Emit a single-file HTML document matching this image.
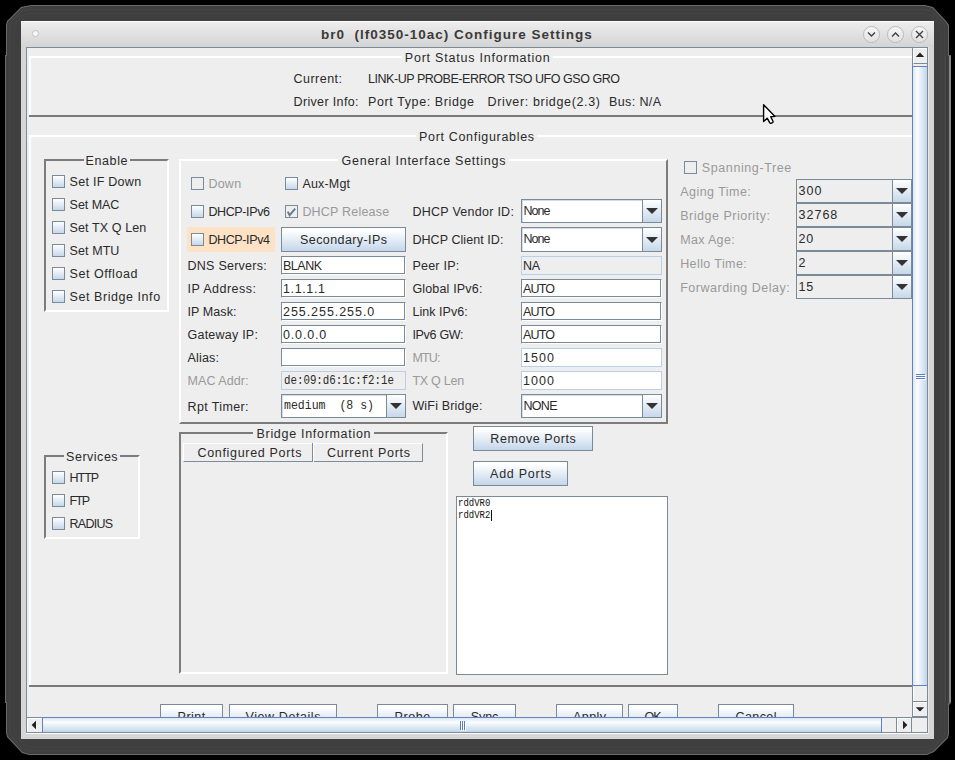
<!DOCTYPE html>
<html><head><meta charset="utf-8"><title>br0 Configure Settings</title>
<style>
html,body{margin:0;padding:0;width:955px;height:760px;overflow:hidden;background:#000;}
body{position:relative;font-family:"Liberation Sans", sans-serif;}
body div{position:absolute;}
</style></head><body>
<svg style="position:absolute;left:0;top:0" width="955" height="760"><polygon points="31,5 925,5 933,7 947,22 949,25 949,55 951,55 951,703 949,705 949,734 948,738 934,752 927,755 29,755 22,753 7,737 6,733 6,703 5,703 5,55 6,55 6,25 7,21 21,7" fill="#6a6a6a"/><polygon points="31,6 925,6 932.5,8 946,22.5 948,25.5 948,56 949,56 949,702 948,704 948,734 947,737.5 933.5,751 927,754 29,754 22.5,752 8,736.5 7,733 7,702 6,702 6,56 7,56 7,25 8,21.5 21.5,8" fill="#3f3f3f"/><rect x="949" y="56" width="2" height="646" fill="#888"/><rect x="946" y="56" width="1" height="646" fill="#363636"/><rect x="945" y="56" width="1" height="646" fill="#555"/><polygon points="30,9.5 22,11 11,22 10,26 10,732 11,735 23,749 30,751 926,751 932,749 944,736 945,733 945,26 943,23 931,11 924,9.5" fill="none" stroke="#474747" stroke-width="1"/><polygon points="29,13.5 23,15 15,23 14,27 14,731 15,733 24,745 30,747 925,747 931,745 940,734 941,731 941,27 939,24 930,15 923,13.5" fill="none" stroke="#444" stroke-width="1"/></svg>
<div style="left:21px;top:21px;width:913px;height:718px;background:#d6d6d6;"></div>
<div style="left:21px;top:21px;width:913px;height:26px;background:linear-gradient(#ededed,#d4d4d4);border-top:1px solid #fff;box-sizing:border-box;"></div>
<div style="left:32px;top:30px;width:7px;height:7px;border-radius:50%;box-sizing:border-box;border:1px solid #c0c0c0;background:#f8f8f8;"></div>
<div style="left:320.9px;top:27.2px;height:16px;line-height:16px;color:#3a3a3a;font-family:&quot;Liberation Sans&quot;, sans-serif;font-size:13.5px;font-weight:bold;letter-spacing:1.005px;white-space:pre;">br0  (lf0350-10ac) Configure Settings</div>
<div style="left:863.0px;top:25.5px;width:17px;height:17px;border-radius:50%;box-sizing:border-box;border:1.5px solid #bababa;background:linear-gradient(#f6f6f6,#e2e2e2);"></div>
<svg style="position:absolute;left:863.0px;top:25.8px" width="17" height="17"><path d="M5,6.5 L8.5,10 L12,6.5" stroke="#3e3e3e" stroke-width="1.35" fill="none"/></svg>
<div style="left:887.0px;top:25.5px;width:17px;height:17px;border-radius:50%;box-sizing:border-box;border:1.5px solid #bababa;background:linear-gradient(#f6f6f6,#e2e2e2);"></div>
<svg style="position:absolute;left:887.0px;top:25.8px" width="17" height="17"><path d="M5,10.5 L8.5,7 L12,10.5" stroke="#3e3e3e" stroke-width="1.35" fill="none"/></svg>
<div style="left:911.0px;top:25.5px;width:17px;height:17px;border-radius:50%;box-sizing:border-box;border:1.5px solid #bababa;background:linear-gradient(#f6f6f6,#e2e2e2);"></div>
<svg style="position:absolute;left:911.0px;top:25.8px" width="17" height="17"><path d="M5,5 L12,12 M12,5 L5,12" stroke="#3e3e3e" stroke-width="1.35" fill="none"/></svg>
<div style="left:26px;top:47px;width:903px;height:687px;box-sizing:border-box;border-left:1px solid #7a8a99;border-top:1px solid #7a8a99;border-right:1px solid #fff;border-bottom:1px solid #fff;"></div>
<div style="left:27px;top:48px;width:885px;height:669px;background:#eeeeee;overflow:hidden;"></div>
<div style="left:29px;top:56px;width:883px;height:2px;background:#fff;"></div>
<div style="left:29px;top:56px;width:2px;height:59px;background:#fff;"></div>
<div style="left:29px;top:115px;width:883px;height:2px;background:#7a7a7a;"></div>
<div style="left:401.5px;top:54.8px;width:151.5px;height:6px;background:#eeeeee;"></div>
<div style="left:404.8px;top:50.2px;height:16px;line-height:16px;color:#2a2a2a;font-family:&quot;Liberation Sans&quot;, sans-serif;font-size:12.5px;letter-spacing:0.780px;white-space:pre;">Port Status Information</div>
<div style="left:293.5px;top:71.1px;height:16px;line-height:16px;color:#2a2a2a;font-family:&quot;Liberation Sans&quot;, sans-serif;font-size:12.5px;letter-spacing:0.478px;white-space:pre;">Current:</div>
<div style="left:368.0px;top:71.1px;height:16px;line-height:16px;color:#2a2a2a;font-family:&quot;Liberation Sans&quot;, sans-serif;font-size:12.5px;letter-spacing:-0.460px;white-space:pre;">LINK-UP PROBE-ERROR TSO UFO GSO GRO</div>
<div style="left:293.5px;top:94.1px;height:16px;line-height:16px;color:#2a2a2a;font-family:&quot;Liberation Sans&quot;, sans-serif;font-size:12.5px;letter-spacing:0.351px;white-space:pre;">Driver Info:</div>
<div style="left:368.0px;top:94.1px;height:16px;line-height:16px;color:#2a2a2a;font-family:&quot;Liberation Sans&quot;, sans-serif;font-size:12.5px;letter-spacing:0.603px;white-space:pre;">Port Type: Bridge</div>
<div style="left:487.5px;top:94.1px;height:16px;line-height:16px;color:#2a2a2a;font-family:&quot;Liberation Sans&quot;, sans-serif;font-size:12.5px;letter-spacing:0.654px;white-space:pre;">Driver: bridge(2.3)</div>
<div style="left:609.0px;top:94.1px;height:16px;line-height:16px;color:#2a2a2a;font-family:&quot;Liberation Sans&quot;, sans-serif;font-size:12.5px;letter-spacing:0.382px;white-space:pre;">Bus: N/A</div>
<div style="left:29px;top:135px;width:883px;height:2px;background:#fff;"></div>
<div style="left:29px;top:135px;width:2px;height:550px;background:#fff;"></div>
<div style="left:29px;top:685px;width:883px;height:2px;background:#7a7a7a;"></div>
<div style="left:416px;top:133.5px;width:121px;height:6px;background:#eeeeee;"></div>
<div style="left:419.0px;top:128.9px;height:16px;line-height:16px;color:#2a2a2a;font-family:&quot;Liberation Sans&quot;, sans-serif;font-size:12.5px;letter-spacing:0.675px;white-space:pre;">Port Configurables</div>
<div style="left:44px;top:159px;width:125px;height:153px;box-sizing:border-box;border-left:2px solid #7c7c7c;border-top:2px solid #7c7c7c;border-right:2px solid #fff;border-bottom:2px solid #fff;"></div>
<div style="left:83.5px;top:157.3px;width:46.0px;height:6px;background:#eeeeee;"></div>
<div style="left:85.5px;top:152.7px;height:16px;line-height:16px;color:#2a2a2a;font-family:&quot;Liberation Sans&quot;, sans-serif;font-size:12.5px;letter-spacing:0.613px;white-space:pre;">Enable</div>
<div style="left:52px;top:175px;width:13px;height:13px;box-sizing:border-box;border:1px solid #7a8a99;background:linear-gradient(#ffffff,#c6d8ea);"></div>
<div style="left:69.6px;top:173.8px;height:16px;line-height:16px;color:#2a2a2a;font-family:&quot;Liberation Sans&quot;, sans-serif;font-size:12.5px;letter-spacing:0.272px;white-space:pre;">Set IF Down</div>
<div style="left:52px;top:198px;width:13px;height:13px;box-sizing:border-box;border:1px solid #7a8a99;background:linear-gradient(#ffffff,#c6d8ea);"></div>
<div style="left:69.6px;top:196.9px;height:16px;line-height:16px;color:#2a2a2a;font-family:&quot;Liberation Sans&quot;, sans-serif;font-size:12.5px;letter-spacing:-0.036px;white-space:pre;">Set MAC</div>
<div style="left:52px;top:221px;width:13px;height:13px;box-sizing:border-box;border:1px solid #7a8a99;background:linear-gradient(#ffffff,#c6d8ea);"></div>
<div style="left:69.6px;top:219.9px;height:16px;line-height:16px;color:#2a2a2a;font-family:&quot;Liberation Sans&quot;, sans-serif;font-size:12.5px;letter-spacing:0.108px;white-space:pre;">Set TX Q Len</div>
<div style="left:52px;top:244px;width:13px;height:13px;box-sizing:border-box;border:1px solid #7a8a99;background:linear-gradient(#ffffff,#c6d8ea);"></div>
<div style="left:69.6px;top:243.0px;height:16px;line-height:16px;color:#2a2a2a;font-family:&quot;Liberation Sans&quot;, sans-serif;font-size:12.5px;letter-spacing:0.081px;white-space:pre;">Set MTU</div>
<div style="left:52px;top:267px;width:13px;height:13px;box-sizing:border-box;border:1px solid #7a8a99;background:linear-gradient(#ffffff,#c6d8ea);"></div>
<div style="left:69.6px;top:266.0px;height:16px;line-height:16px;color:#2a2a2a;font-family:&quot;Liberation Sans&quot;, sans-serif;font-size:12.5px;letter-spacing:0.549px;white-space:pre;">Set Offload</div>
<div style="left:52px;top:290px;width:13px;height:13px;box-sizing:border-box;border:1px solid #7a8a99;background:linear-gradient(#ffffff,#c6d8ea);"></div>
<div style="left:69.6px;top:289.0px;height:16px;line-height:16px;color:#2a2a2a;font-family:&quot;Liberation Sans&quot;, sans-serif;font-size:12.5px;letter-spacing:0.557px;white-space:pre;">Set Bridge Info</div>
<div style="left:44px;top:455px;width:96px;height:84px;box-sizing:border-box;border-left:2px solid #7c7c7c;border-top:2px solid #7c7c7c;border-right:2px solid #fff;border-bottom:2px solid #fff;"></div>
<div style="left:64px;top:453.7px;width:55.7px;height:6px;background:#eeeeee;"></div>
<div style="left:66.1px;top:449.1px;height:16px;line-height:16px;color:#2a2a2a;font-family:&quot;Liberation Sans&quot;, sans-serif;font-size:12.5px;letter-spacing:0.509px;white-space:pre;">Services</div>
<div style="left:52px;top:471px;width:13px;height:13px;box-sizing:border-box;border:1px solid #7a8a99;background:linear-gradient(#ffffff,#c6d8ea);"></div>
<div style="left:69.4px;top:469.7px;height:16px;line-height:16px;color:#2a2a2a;font-family:&quot;Liberation Sans&quot;, sans-serif;font-size:12.5px;letter-spacing:-0.947px;white-space:pre;">HTTP</div>
<div style="left:52px;top:494px;width:13px;height:13px;box-sizing:border-box;border:1px solid #7a8a99;background:linear-gradient(#ffffff,#c6d8ea);"></div>
<div style="left:69.4px;top:492.8px;height:16px;line-height:16px;color:#2a2a2a;font-family:&quot;Liberation Sans&quot;, sans-serif;font-size:12.5px;letter-spacing:-1.455px;white-space:pre;">FTP</div>
<div style="left:52px;top:517px;width:13px;height:13px;box-sizing:border-box;border:1px solid #7a8a99;background:linear-gradient(#ffffff,#c6d8ea);"></div>
<div style="left:69.4px;top:515.9px;height:16px;line-height:16px;color:#2a2a2a;font-family:&quot;Liberation Sans&quot;, sans-serif;font-size:12.5px;letter-spacing:-0.687px;white-space:pre;">RADIUS</div>
<div style="left:179px;top:159px;width:489px;height:265px;box-sizing:border-box;border-left:2px solid #fff;border-top:2px solid #fff;border-right:2px solid #7c7c7c;border-bottom:2px solid #7c7c7c;"></div>
<div style="left:338px;top:157.5px;width:171px;height:6px;background:#eeeeee;"></div>
<div style="left:341.5px;top:152.9px;height:16px;line-height:16px;color:#2a2a2a;font-family:&quot;Liberation Sans&quot;, sans-serif;font-size:12.5px;letter-spacing:0.751px;white-space:pre;">General Interface Settings</div>
<div style="left:191px;top:177px;width:13px;height:13px;box-sizing:border-box;border:1px solid #7a8a99;background:#eeeeee;"></div>
<div style="left:208.4px;top:176.2px;height:16px;line-height:16px;color:#999;font-family:&quot;Liberation Sans&quot;, sans-serif;font-size:12.5px;letter-spacing:0.244px;white-space:pre;">Down</div>
<div style="left:285px;top:177px;width:13px;height:13px;box-sizing:border-box;border:1px solid #7a8a99;background:linear-gradient(#ffffff,#c6d8ea);"></div>
<div style="left:302.4px;top:176.2px;height:16px;line-height:16px;color:#2a2a2a;font-family:&quot;Liberation Sans&quot;, sans-serif;font-size:12.5px;letter-spacing:0.192px;white-space:pre;">Aux-Mgt</div>
<div style="left:191px;top:205px;width:13px;height:13px;box-sizing:border-box;border:1px solid #7a8a99;background:linear-gradient(#ffffff,#c6d8ea);"></div>
<div style="left:208.4px;top:203.9px;height:16px;line-height:16px;color:#2a2a2a;font-family:&quot;Liberation Sans&quot;, sans-serif;font-size:12.5px;letter-spacing:-0.374px;white-space:pre;">DHCP-IPv6</div>
<div style="left:285px;top:205px;width:13px;height:13px;box-sizing:border-box;border:1px solid #7a8a99;background:#eeeeee;"></div>
<svg style="position:absolute;left:285px;top:205px" width="13" height="13"><path d="M2.8,6.6 L4.6,10.2 L10.2,3.6" stroke="#6a7b8c" stroke-width="1.9" fill="none" stroke-linejoin="miter"/></svg>
<div style="left:302.4px;top:203.9px;height:16px;line-height:16px;color:#999;font-family:&quot;Liberation Sans&quot;, sans-serif;font-size:12.5px;letter-spacing:0.197px;white-space:pre;">DHCP Release</div>
<div style="left:412.4px;top:203.8px;height:16px;line-height:16px;color:#2a2a2a;font-family:&quot;Liberation Sans&quot;, sans-serif;font-size:12.5px;letter-spacing:0.269px;white-space:pre;">DHCP Vendor ID:</div>
<div style="left:521px;top:199px;width:141px;height:24px;box-sizing:border-box;border:1px solid #7a8a99;background:#ffffff;box-shadow:inset 1px 1px 0 #d0dcea;"></div>
<div style="left:642px;top:200px;width:19px;height:22px;box-sizing:border-box;border-left:1px solid #7a8a99;background:linear-gradient(#ffffff,#c6d8ea);"></div>
<svg style="position:absolute;left:644.5px;top:207.0px" width="14" height="8"><path d="M1,1 L13,1 L7,7 Z" fill="#333"/></svg>
<div style="left:523.5px;top:202.9px;height:16px;line-height:16px;color:#2a2a2a;font-family:&quot;Liberation Sans&quot;, sans-serif;font-size:12.5px;letter-spacing:-0.964px;white-space:pre;">None</div>
<div style="left:187px;top:227px;width:88px;height:25px;background:#fde2c6;"></div>
<div style="left:191px;top:233px;width:13px;height:13px;box-sizing:border-box;border:1px solid #7a8a99;background:linear-gradient(#ffffff,#c6d8ea);"></div>
<div style="left:208.4px;top:231.6px;height:16px;line-height:16px;color:#2a2a2a;font-family:&quot;Liberation Sans&quot;, sans-serif;font-size:12.5px;letter-spacing:-0.374px;white-space:pre;">DHCP-IPv4</div>
<div style="left:281px;top:227px;width:125px;height:25px;box-sizing:border-box;border:1px solid #7a8a99;background:linear-gradient(#ffffff 10%,#c4d6ea);"></div>
<div style="left:300.0px;top:231.9px;height:16px;line-height:16px;color:#2a2a2a;font-family:&quot;Liberation Sans&quot;, sans-serif;font-size:12.5px;letter-spacing:0.418px;white-space:pre;">Secondary-IPs</div>
<div style="left:412.4px;top:231.8px;height:16px;line-height:16px;color:#2a2a2a;font-family:&quot;Liberation Sans&quot;, sans-serif;font-size:12.5px;letter-spacing:0.066px;white-space:pre;">DHCP Client ID:</div>
<div style="left:521px;top:227px;width:141px;height:25px;box-sizing:border-box;border:1px solid #7a8a99;background:#ffffff;box-shadow:inset 1px 1px 0 #d0dcea;"></div>
<div style="left:642px;top:228px;width:19px;height:23px;box-sizing:border-box;border-left:1px solid #7a8a99;background:linear-gradient(#ffffff,#c6d8ea);"></div>
<svg style="position:absolute;left:644.5px;top:235.5px" width="14" height="8"><path d="M1,1 L13,1 L7,7 Z" fill="#333"/></svg>
<div style="left:523.5px;top:231.4px;height:16px;line-height:16px;color:#2a2a2a;font-family:&quot;Liberation Sans&quot;, sans-serif;font-size:12.5px;letter-spacing:-0.964px;white-space:pre;">None</div>
<div style="left:187.5px;top:258.4px;height:16px;line-height:16px;color:#2a2a2a;font-family:&quot;Liberation Sans&quot;, sans-serif;font-size:12.5px;letter-spacing:0.254px;white-space:pre;">DNS Servers:</div>
<div style="left:281px;top:256px;width:125px;height:19px;box-sizing:border-box;border:1px solid #7a8a99;border-right-color:#fff;border-bottom-color:#fff;background:#ffffff;box-shadow:inset -1px -1px 0 #7a8a99;"></div>
<div style="left:283.0px;top:258.4px;height:16px;line-height:16px;color:#2a2a2a;font-family:&quot;Liberation Sans&quot;, sans-serif;font-size:12.5px;letter-spacing:-0.500px;white-space:pre;">BLANK</div>
<div style="left:412.4px;top:258.4px;height:16px;line-height:16px;color:#2a2a2a;font-family:&quot;Liberation Sans&quot;, sans-serif;font-size:12.5px;letter-spacing:0.233px;white-space:pre;">Peer IP:</div>
<div style="left:521px;top:256px;width:141px;height:19px;box-sizing:border-box;border:1px solid #b8cfe5;background:#eeeeee;"></div>
<div style="left:523.0px;top:258.4px;height:16px;line-height:16px;color:#2a2a2a;font-family:&quot;Liberation Sans&quot;, sans-serif;font-size:12.5px;letter-spacing:-0.375px;white-space:pre;">NA</div>
<div style="left:187.5px;top:281.4px;height:16px;line-height:16px;color:#2a2a2a;font-family:&quot;Liberation Sans&quot;, sans-serif;font-size:12.5px;letter-spacing:0.470px;white-space:pre;">IP Address:</div>
<div style="left:281px;top:279px;width:125px;height:19px;box-sizing:border-box;border:1px solid #7a8a99;border-right-color:#fff;border-bottom-color:#fff;background:#ffffff;box-shadow:inset -1px -1px 0 #7a8a99;"></div>
<div style="left:283.0px;top:281.4px;height:16px;line-height:16px;color:#2a2a2a;font-family:&quot;Liberation Sans&quot;, sans-serif;font-size:12.5px;letter-spacing:0.628px;white-space:pre;">1.1.1.1</div>
<div style="left:412.4px;top:281.4px;height:16px;line-height:16px;color:#2a2a2a;font-family:&quot;Liberation Sans&quot;, sans-serif;font-size:12.5px;letter-spacing:0.173px;white-space:pre;">Global IPv6:</div>
<div style="left:521px;top:279px;width:141px;height:19px;box-sizing:border-box;border:1px solid #7a8a99;border-right-color:#fff;border-bottom-color:#fff;background:#ffffff;box-shadow:inset -1px -1px 0 #7a8a99;"></div>
<div style="left:523.0px;top:281.4px;height:16px;line-height:16px;color:#2a2a2a;font-family:&quot;Liberation Sans&quot;, sans-serif;font-size:12.5px;letter-spacing:-0.833px;white-space:pre;">AUTO</div>
<div style="left:187.5px;top:304.4px;height:16px;line-height:16px;color:#2a2a2a;font-family:&quot;Liberation Sans&quot;, sans-serif;font-size:12.5px;letter-spacing:0.085px;white-space:pre;">IP Mask:</div>
<div style="left:281px;top:302px;width:125px;height:19px;box-sizing:border-box;border:1px solid #7a8a99;border-right-color:#fff;border-bottom-color:#fff;background:#ffffff;box-shadow:inset -1px -1px 0 #7a8a99;"></div>
<div style="left:283.0px;top:304.4px;height:16px;line-height:16px;color:#2a2a2a;font-family:&quot;Liberation Sans&quot;, sans-serif;font-size:12.5px;letter-spacing:0.946px;white-space:pre;">255.255.255.0</div>
<div style="left:412.4px;top:304.4px;height:16px;line-height:16px;color:#2a2a2a;font-family:&quot;Liberation Sans&quot;, sans-serif;font-size:12.5px;letter-spacing:0.045px;white-space:pre;">Link IPv6:</div>
<div style="left:521px;top:302px;width:141px;height:19px;box-sizing:border-box;border:1px solid #7a8a99;border-right-color:#fff;border-bottom-color:#fff;background:#ffffff;box-shadow:inset -1px -1px 0 #7a8a99;"></div>
<div style="left:523.0px;top:304.4px;height:16px;line-height:16px;color:#2a2a2a;font-family:&quot;Liberation Sans&quot;, sans-serif;font-size:12.5px;letter-spacing:-0.833px;white-space:pre;">AUTO</div>
<div style="left:187.5px;top:327.4px;height:16px;line-height:16px;color:#2a2a2a;font-family:&quot;Liberation Sans&quot;, sans-serif;font-size:12.5px;letter-spacing:0.231px;white-space:pre;">Gateway IP:</div>
<div style="left:281px;top:325px;width:125px;height:19px;box-sizing:border-box;border:1px solid #7a8a99;border-right-color:#fff;border-bottom-color:#fff;background:#ffffff;box-shadow:inset -1px -1px 0 #7a8a99;"></div>
<div style="left:283.0px;top:327.4px;height:16px;line-height:16px;color:#2a2a2a;font-family:&quot;Liberation Sans&quot;, sans-serif;font-size:12.5px;letter-spacing:0.844px;white-space:pre;">0.0.0.0</div>
<div style="left:412.4px;top:327.4px;height:16px;line-height:16px;color:#2a2a2a;font-family:&quot;Liberation Sans&quot;, sans-serif;font-size:12.5px;letter-spacing:-0.295px;white-space:pre;">IPv6 GW:</div>
<div style="left:521px;top:325px;width:141px;height:19px;box-sizing:border-box;border:1px solid #7a8a99;border-right-color:#fff;border-bottom-color:#fff;background:#ffffff;box-shadow:inset -1px -1px 0 #7a8a99;"></div>
<div style="left:523.0px;top:327.4px;height:16px;line-height:16px;color:#2a2a2a;font-family:&quot;Liberation Sans&quot;, sans-serif;font-size:12.5px;letter-spacing:-0.833px;white-space:pre;">AUTO</div>
<div style="left:187.5px;top:350.4px;height:16px;line-height:16px;color:#2a2a2a;font-family:&quot;Liberation Sans&quot;, sans-serif;font-size:12.5px;letter-spacing:0.184px;white-space:pre;">Alias:</div>
<div style="left:281px;top:348px;width:125px;height:19px;box-sizing:border-box;border:1px solid #7a8a99;border-right-color:#fff;border-bottom-color:#fff;background:#ffffff;box-shadow:inset -1px -1px 0 #7a8a99;"></div>
<div style="left:412.4px;top:350.4px;height:16px;line-height:16px;color:#999;font-family:&quot;Liberation Sans&quot;, sans-serif;font-size:12.5px;letter-spacing:-0.854px;white-space:pre;">MTU:</div>
<div style="left:521px;top:348px;width:141px;height:19px;box-sizing:border-box;border:1px solid #b8cfe5;background:#ffffff;"></div>
<div style="left:523.0px;top:350.4px;height:16px;line-height:16px;color:#2a2a2a;font-family:&quot;Liberation Sans&quot;, sans-serif;font-size:12.5px;letter-spacing:1.062px;white-space:pre;">1500</div>
<div style="left:187.5px;top:373.4px;height:16px;line-height:16px;color:#999;font-family:&quot;Liberation Sans&quot;, sans-serif;font-size:12.5px;letter-spacing:0.070px;white-space:pre;">MAC Addr:</div>
<div style="left:281px;top:371px;width:125px;height:19px;box-sizing:border-box;border:1px solid #b8cfe5;background:#eeeeee;"></div>
<div style="left:283.5px;top:373.4px;height:16px;line-height:16px;color:#2a2a2a;font-family:&quot;Liberation Mono&quot;, monospace;font-size:12.5px;transform:scaleX(0.8625);transform-origin:0 0;white-space:pre;">de:09:d6:1c:f2:1e</div>
<div style="left:412.4px;top:373.4px;height:16px;line-height:16px;color:#999;font-family:&quot;Liberation Sans&quot;, sans-serif;font-size:12.5px;letter-spacing:-0.243px;white-space:pre;">TX Q Len</div>
<div style="left:521px;top:371px;width:141px;height:19px;box-sizing:border-box;border:1px solid #b8cfe5;background:#ffffff;"></div>
<div style="left:523.0px;top:373.4px;height:16px;line-height:16px;color:#2a2a2a;font-family:&quot;Liberation Sans&quot;, sans-serif;font-size:12.5px;letter-spacing:1.062px;white-space:pre;">1000</div>
<div style="left:187.5px;top:398.7px;height:16px;line-height:16px;color:#2a2a2a;font-family:&quot;Liberation Sans&quot;, sans-serif;font-size:12.5px;letter-spacing:0.372px;white-space:pre;">Rpt Timer:</div>
<div style="left:281px;top:394px;width:125px;height:24px;box-sizing:border-box;border:1px solid #7a8a99;background:#ffffff;box-shadow:inset 1px 1px 0 #d0dcea;"></div>
<div style="left:386px;top:395px;width:19px;height:22px;box-sizing:border-box;border-left:1px solid #7a8a99;background:linear-gradient(#ffffff,#c6d8ea);"></div>
<svg style="position:absolute;left:388.5px;top:402.0px" width="14" height="8"><path d="M1,1 L13,1 L7,7 Z" fill="#333"/></svg>
<div style="left:283.5px;top:398.2px;height:16px;line-height:16px;color:#2a2a2a;font-family:&quot;Liberation Mono&quot;, monospace;font-size:12.5px;transform:scaleX(0.9228);transform-origin:0 0;white-space:pre;">medium  (8 s)</div>
<div style="left:412.4px;top:398.2px;height:16px;line-height:16px;color:#2a2a2a;font-family:&quot;Liberation Sans&quot;, sans-serif;font-size:12.5px;letter-spacing:0.175px;white-space:pre;">WiFi Bridge:</div>
<div style="left:521px;top:394px;width:141px;height:24px;box-sizing:border-box;border:1px solid #7a8a99;background:#ffffff;box-shadow:inset 1px 1px 0 #d0dcea;"></div>
<div style="left:642px;top:395px;width:19px;height:22px;box-sizing:border-box;border-left:1px solid #7a8a99;background:linear-gradient(#ffffff,#c6d8ea);"></div>
<svg style="position:absolute;left:644.5px;top:402.0px" width="14" height="8"><path d="M1,1 L13,1 L7,7 Z" fill="#333"/></svg>
<div style="left:523.5px;top:397.9px;height:16px;line-height:16px;color:#2a2a2a;font-family:&quot;Liberation Sans&quot;, sans-serif;font-size:12.5px;letter-spacing:-0.708px;white-space:pre;">NONE</div>
<div style="left:684px;top:161px;width:13px;height:13px;box-sizing:border-box;border:1px solid #7a8a99;background:#eeeeee;"></div>
<div style="left:701.8px;top:160.0px;height:16px;line-height:16px;color:#999;font-family:&quot;Liberation Sans&quot;, sans-serif;font-size:12.5px;letter-spacing:0.597px;white-space:pre;">Spanning-Tree</div>
<div style="left:680.2px;top:183.8px;height:16px;line-height:16px;color:#999;font-family:&quot;Liberation Sans&quot;, sans-serif;font-size:12.5px;letter-spacing:0.458px;white-space:pre;">Aging Time:</div>
<div style="left:796px;top:179px;width:116px;height:24px;box-sizing:border-box;border:1px solid #7a8a99;background:#eeeeee;"></div>
<div style="left:892px;top:180px;width:19px;height:22px;box-sizing:border-box;border-left:1px solid #7a8a99;background:linear-gradient(#ffffff,#c6d8ea);"></div>
<svg style="position:absolute;left:894.5px;top:187.0px" width="14" height="8"><path d="M1,1 L13,1 L7,7 Z" fill="#333"/></svg>
<div style="left:798.5px;top:182.6px;height:16px;line-height:16px;color:#2a2a2a;font-family:&quot;Liberation Sans&quot;, sans-serif;font-size:12.5px;letter-spacing:1.070px;white-space:pre;">300</div>
<div style="left:680.2px;top:207.8px;height:16px;line-height:16px;color:#999;font-family:&quot;Liberation Sans&quot;, sans-serif;font-size:12.5px;letter-spacing:0.514px;white-space:pre;">Bridge Priority:</div>
<div style="left:796px;top:203px;width:116px;height:24px;box-sizing:border-box;border:1px solid #7a8a99;background:#eeeeee;"></div>
<div style="left:892px;top:204px;width:19px;height:22px;box-sizing:border-box;border-left:1px solid #7a8a99;background:linear-gradient(#ffffff,#c6d8ea);"></div>
<svg style="position:absolute;left:894.5px;top:211.0px" width="14" height="8"><path d="M1,1 L13,1 L7,7 Z" fill="#333"/></svg>
<div style="left:798.5px;top:206.6px;height:16px;line-height:16px;color:#2a2a2a;font-family:&quot;Liberation Sans&quot;, sans-serif;font-size:12.5px;letter-spacing:1.009px;white-space:pre;">32768</div>
<div style="left:680.2px;top:231.8px;height:16px;line-height:16px;color:#999;font-family:&quot;Liberation Sans&quot;, sans-serif;font-size:12.5px;letter-spacing:0.339px;white-space:pre;">Max Age:</div>
<div style="left:796px;top:227px;width:116px;height:24px;box-sizing:border-box;border:1px solid #7a8a99;background:#eeeeee;"></div>
<div style="left:892px;top:228px;width:19px;height:22px;box-sizing:border-box;border-left:1px solid #7a8a99;background:linear-gradient(#ffffff,#c6d8ea);"></div>
<svg style="position:absolute;left:894.5px;top:235.0px" width="14" height="8"><path d="M1,1 L13,1 L7,7 Z" fill="#333"/></svg>
<div style="left:798.5px;top:230.6px;height:16px;line-height:16px;color:#2a2a2a;font-family:&quot;Liberation Sans&quot;, sans-serif;font-size:12.5px;letter-spacing:0.794px;white-space:pre;">20</div>
<div style="left:680.2px;top:255.8px;height:16px;line-height:16px;color:#999;font-family:&quot;Liberation Sans&quot;, sans-serif;font-size:12.5px;letter-spacing:0.407px;white-space:pre;">Hello Time:</div>
<div style="left:796px;top:251px;width:116px;height:24px;box-sizing:border-box;border:1px solid #7a8a99;background:#eeeeee;"></div>
<div style="left:892px;top:252px;width:19px;height:22px;box-sizing:border-box;border-left:1px solid #7a8a99;background:linear-gradient(#ffffff,#c6d8ea);"></div>
<svg style="position:absolute;left:894.5px;top:259.0px" width="14" height="8"><path d="M1,1 L13,1 L7,7 Z" fill="#333"/></svg>
<div style="left:798.5px;top:254.6px;height:16px;line-height:16px;color:#2a2a2a;font-family:&quot;Liberation Sans&quot;, sans-serif;font-size:12.5px;white-space:pre;">2</div>
<div style="left:680.2px;top:279.8px;height:16px;line-height:16px;color:#999;font-family:&quot;Liberation Sans&quot;, sans-serif;font-size:12.5px;letter-spacing:0.510px;white-space:pre;">Forwarding Delay:</div>
<div style="left:796px;top:275px;width:116px;height:24px;box-sizing:border-box;border:1px solid #7a8a99;background:#eeeeee;"></div>
<div style="left:892px;top:276px;width:19px;height:22px;box-sizing:border-box;border-left:1px solid #7a8a99;background:linear-gradient(#ffffff,#c6d8ea);"></div>
<svg style="position:absolute;left:894.5px;top:283.0px" width="14" height="8"><path d="M1,1 L13,1 L7,7 Z" fill="#333"/></svg>
<div style="left:798.5px;top:278.6px;height:16px;line-height:16px;color:#2a2a2a;font-family:&quot;Liberation Sans&quot;, sans-serif;font-size:12.5px;letter-spacing:0.794px;white-space:pre;">15</div>
<div style="left:179px;top:432px;width:269px;height:242px;box-sizing:border-box;border-left:2px solid #7c7c7c;border-top:2px solid #7c7c7c;border-right:2px solid #fff;border-bottom:2px solid #fff;"></div>
<div style="left:253px;top:430.5px;width:121px;height:6px;background:#eeeeee;"></div>
<div style="left:256.5px;top:425.9px;height:16px;line-height:16px;color:#2a2a2a;font-family:&quot;Liberation Sans&quot;, sans-serif;font-size:12.5px;letter-spacing:0.698px;white-space:pre;">Bridge Information</div>
<div style="left:183px;top:443px;width:240px;height:19px;box-sizing:border-box;background:#eeeeee;border-left:1px solid #fff;border-top:1px solid #fff;border-bottom:1px solid #7d8c9a;border-right:1px solid #7d8c9a;"></div>
<div style="left:312px;top:443px;width:1px;height:19px;background:#7d8c9a;"></div>
<div style="left:313px;top:444px;width:1px;height:18px;background:#fff;"></div>
<div style="left:197.5px;top:444.9px;height:16px;line-height:16px;color:#2a2a2a;font-family:&quot;Liberation Sans&quot;, sans-serif;font-size:12.5px;letter-spacing:0.679px;white-space:pre;">Configured Ports</div>
<div style="left:327.0px;top:444.9px;height:16px;line-height:16px;color:#2a2a2a;font-family:&quot;Liberation Sans&quot;, sans-serif;font-size:12.5px;letter-spacing:0.721px;white-space:pre;">Current Ports</div>
<div style="left:473px;top:426px;width:120px;height:25px;box-sizing:border-box;border:1px solid #7a8a99;background:linear-gradient(#ffffff 10%,#c4d6ea);"></div>
<div style="left:490.3px;top:430.9px;height:16px;line-height:16px;color:#2a2a2a;font-family:&quot;Liberation Sans&quot;, sans-serif;font-size:12.5px;letter-spacing:0.563px;white-space:pre;">Remove Ports</div>
<div style="left:473px;top:461px;width:95px;height:25px;box-sizing:border-box;border:1px solid #7a8a99;background:linear-gradient(#ffffff 10%,#c4d6ea);"></div>
<div style="left:490.1px;top:465.9px;height:16px;line-height:16px;color:#2a2a2a;font-family:&quot;Liberation Sans&quot;, sans-serif;font-size:12.5px;letter-spacing:0.739px;white-space:pre;">Add Ports</div>
<div style="left:456px;top:496px;width:212px;height:179px;box-sizing:border-box;border:1px solid #7a8a99;background:#fff;"></div>
<div style="left:457.9px;top:497.0px;height:12px;line-height:12px;color:#111;font-family:&quot;Liberation Mono&quot;, monospace;font-size:11px;transform:scaleX(0.8155);transform-origin:0 0;white-space:pre;">rddVR0</div>
<div style="left:457.9px;top:509.0px;height:12px;line-height:12px;color:#111;font-family:&quot;Liberation Mono&quot;, monospace;font-size:11px;transform:scaleX(0.8155);transform-origin:0 0;white-space:pre;">rddVR2</div>
<div style="left:491px;top:510px;width:1px;height:11px;background:#111;"></div>
<div style="left:160px;top:704px;width:63px;height:13px;overflow:hidden;">
<div style="left:0px;top:0px;width:63px;height:25px;box-sizing:border-box;border:1px solid #7a8a99;background:linear-gradient(#ffffff 10%,#c4d6ea);"></div>
<div style="left:17.6px;top:4.8px;height:16px;line-height:16px;color:#2a2a2a;font-family:&quot;Liberation Sans&quot;, sans-serif;font-size:12.5px;letter-spacing:0.499px;white-space:pre;">Print</div>
</div>
<div style="left:229px;top:704px;width:108px;height:13px;overflow:hidden;">
<div style="left:0px;top:0px;width:108px;height:25px;box-sizing:border-box;border:1px solid #7a8a99;background:linear-gradient(#ffffff 10%,#c4d6ea);"></div>
<div style="left:16.5px;top:4.8px;height:16px;line-height:16px;color:#2a2a2a;font-family:&quot;Liberation Sans&quot;, sans-serif;font-size:12.5px;letter-spacing:0.585px;white-space:pre;">View Details</div>
</div>
<div style="left:377px;top:704px;width:71px;height:13px;overflow:hidden;">
<div style="left:0px;top:0px;width:71px;height:25px;box-sizing:border-box;border:1px solid #7a8a99;background:linear-gradient(#ffffff 10%,#c4d6ea);"></div>
<div style="left:17.6px;top:4.8px;height:16px;line-height:16px;color:#2a2a2a;font-family:&quot;Liberation Sans&quot;, sans-serif;font-size:12.5px;letter-spacing:0.585px;white-space:pre;">Probe</div>
</div>
<div style="left:453px;top:704px;width:63px;height:13px;overflow:hidden;">
<div style="left:0px;top:0px;width:63px;height:25px;box-sizing:border-box;border:1px solid #7a8a99;background:linear-gradient(#ffffff 10%,#c4d6ea);"></div>
<div style="left:17.7px;top:4.8px;height:16px;line-height:16px;color:#2a2a2a;font-family:&quot;Liberation Sans&quot;, sans-serif;font-size:12.5px;letter-spacing:-0.066px;white-space:pre;">Sync</div>
</div>
<div style="left:556px;top:704px;width:67px;height:13px;overflow:hidden;">
<div style="left:0px;top:0px;width:67px;height:25px;box-sizing:border-box;border:1px solid #7a8a99;background:linear-gradient(#ffffff 10%,#c4d6ea);"></div>
<div style="left:17.0px;top:4.8px;height:16px;line-height:16px;color:#2a2a2a;font-family:&quot;Liberation Sans&quot;, sans-serif;font-size:12.5px;letter-spacing:0.430px;white-space:pre;">Apply</div>
</div>
<div style="left:628px;top:704px;width:50px;height:13px;overflow:hidden;">
<div style="left:0px;top:0px;width:50px;height:25px;box-sizing:border-box;border:1px solid #7a8a99;background:linear-gradient(#ffffff 10%,#c4d6ea);"></div>
<div style="left:16.5px;top:4.8px;height:16px;line-height:16px;color:#2a2a2a;font-family:&quot;Liberation Sans&quot;, sans-serif;font-size:12.5px;letter-spacing:-1.062px;white-space:pre;">OK</div>
</div>
<div style="left:718px;top:704px;width:76px;height:13px;overflow:hidden;">
<div style="left:0px;top:0px;width:76px;height:25px;box-sizing:border-box;border:1px solid #7a8a99;background:linear-gradient(#ffffff 10%,#c4d6ea);"></div>
<div style="left:17.5px;top:4.8px;height:16px;line-height:16px;color:#2a2a2a;font-family:&quot;Liberation Sans&quot;, sans-serif;font-size:12.5px;letter-spacing:0.416px;white-space:pre;">Cancel</div>
</div>
<div style="left:912px;top:47px;width:16px;height:670px;box-sizing:border-box;background:#eeeeee;border-left:1px solid #7b8b9b;border-right:1px solid #7b8b9b;border-top:1px solid #7b8b9b;"></div>
<div style="left:913px;top:48px;width:14px;height:16px;box-sizing:border-box;border-top:1px solid #fff;border-left:1px solid #fff;border-bottom:1px solid #7b8b9b;background:#eeeeee;"></div>
<svg style="position:absolute;left:912px;top:48px" width="16" height="16"><path d="M3.8,9 L12.2,9 L8,4.6 Z" fill="#222"/></svg>
<div style="left:912px;top:66px;width:16px;height:620px;box-sizing:border-box;border:1px solid #6382bf;border-right-color:#7a8aa0;background:linear-gradient(90deg,#dae6f2,#fbfdff 30%,#c2d5e9);"></div>
<div style="left:916px;top:374px;width:9px;height:1px;background:#5a7ec0;box-shadow:1px 1px 0 #fff;"></div>
<div style="left:916px;top:376px;width:9px;height:1px;background:#5a7ec0;box-shadow:1px 1px 0 #fff;"></div>
<div style="left:916px;top:378px;width:9px;height:1px;background:#5a7ec0;box-shadow:1px 1px 0 #fff;"></div>
<div style="left:913px;top:686px;width:1px;height:15px;background:#fff;"></div>
<div style="left:913px;top:701px;width:14px;height:16px;box-sizing:border-box;border-top:1px solid #7b8b9b;border-bottom:1px solid #7b8b9b;background:#eeeeee;box-shadow:inset 1px 1px 0 #fff;"></div>
<svg style="position:absolute;left:912px;top:701px" width="16" height="16"><path d="M3.8,6.2 L12.2,6.2 L8,10.6 Z" fill="#222"/></svg>
<div style="left:26px;top:717px;width:902px;height:16px;box-sizing:border-box;background:#eeeeee;border-top:1px solid #7b8b9b;border-bottom:1px solid #7b8b9b;border-left:1px solid #7b8b9b;"></div>
<div style="left:27px;top:718px;width:16px;height:14px;box-sizing:border-box;border-left:1px solid #fff;border-top:1px solid #fff;background:#eeeeee;"></div>
<svg style="position:absolute;left:27px;top:717px" width="16" height="16"><path d="M9,3.8 L9,12.2 L4.6,8 Z" fill="#222"/></svg>
<div style="left:42px;top:717px;width:840px;height:16px;box-sizing:border-box;border:1px solid #6382bf;border-bottom-color:#7a8aa0;background:linear-gradient(#dae6f2,#fbfdff 30%,#c2d5e9);"></div>
<div style="left:460px;top:721px;width:1px;height:9px;background:#5a7ec0;box-shadow:1px 1px 0 #fff;"></div>
<div style="left:462px;top:721px;width:1px;height:9px;background:#5a7ec0;box-shadow:1px 1px 0 #fff;"></div>
<div style="left:464px;top:721px;width:1px;height:9px;background:#5a7ec0;box-shadow:1px 1px 0 #fff;"></div>
<div style="left:896px;top:717px;width:16px;height:16px;box-sizing:border-box;border-left:1px solid #7b8b9b;border-right:1px solid #7b8b9b;border-top:1px solid #7b8b9b;border-bottom:1px solid #7b8b9b;background:#eeeeee;box-shadow:inset 1px 1px 0 #fff;"></div>
<svg style="position:absolute;left:896px;top:717px" width="16" height="16"><path d="M7,3.8 L7,12.2 L11.4,8 Z" fill="#222"/></svg>
<div style="left:912px;top:717px;width:16px;height:16px;box-sizing:border-box;background:#eeeeee;border-right:1px solid #7b8b9b;border-bottom:1px solid #7b8b9b;border-top:1px solid #7b8b9b;"></div>
<div style="left:26px;top:733px;width:903px;height:1px;background:#fff;"></div>
<div style="left:928px;top:47px;width:1px;height:687px;background:#e8e8e8;"></div>
<svg style="position:absolute;left:762px;top:103px" width="16" height="24"><path d="M1.6,1.8 L1.6,18.6 L5.2,15.2 L7.7,19.6 Q8.3,20.6 9.4,20.1 L10.5,19.6 Q11.4,19.1 11,18.2 L8.7,13.8 L13,13.4 Z" fill="#fff" stroke="#000" stroke-width="1.4" stroke-linejoin="round"/></svg>
</body></html>
